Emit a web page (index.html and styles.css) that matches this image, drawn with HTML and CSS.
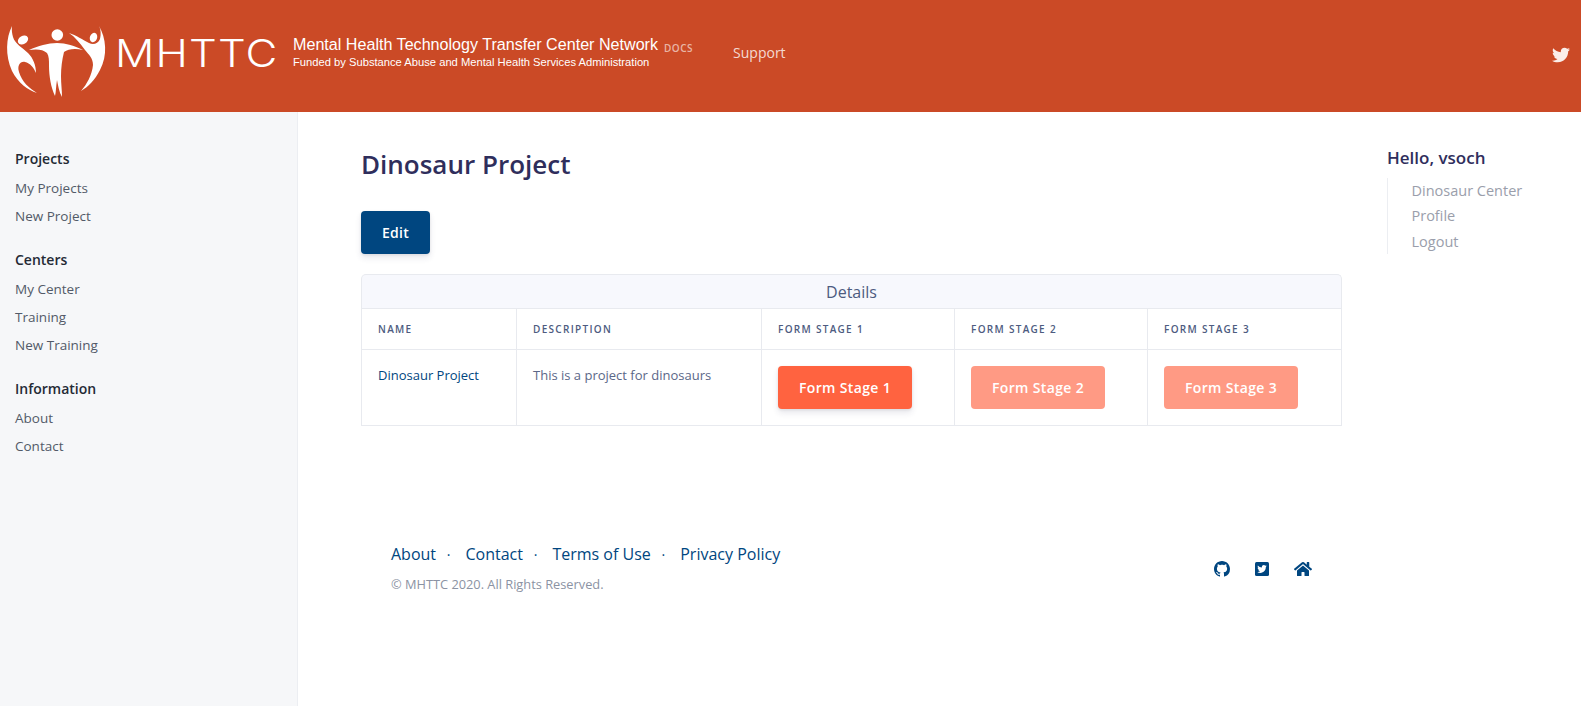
FILE: index.html
```html
<!DOCTYPE html>
<html>
  <head>
    <meta name="viewport" content="width=device-width, initial-scale=1" />
    <title>Dinosaur Project</title>
    <link rel="stylesheet" href="styles.css">
  </head>
  <body>
    <header class="topbar">
      <a class="brand" href="#">
        <svg class="brand-logo" viewBox="0 0 110 112" width="110" height="112" fill="#fff">
          <circle cx="57.3" cy="35" r="5.8"/>
          <path d="M29 50 C38 46 48 43 57 43 C66 43 75 46 83 50 C75 48 68 49 64 52 C62 60 61 68 61 76 C61 84 62 90 62 97 C59 92 58 85 57 80 C56 86 56 92 55 96 C51 88 49 76 49 66 C49 60 49 56 47 53 C43 49 36 49 29 50 Z"/>
          <ellipse cx="23" cy="40" rx="5.5" ry="4" transform="rotate(-30 23 40)"/>
          <path d="M12 26 C6 38 5 55 12 71 C18 83 28 90 37 93 C29 88 22 82 19 72 C17 66 20 61 25 62 C30 63 34 68 36 73 C36 65 33 58 28 53 C22 47 15 44 13 37 C12 33 11.5 30 12 26 Z"/>
          <ellipse cx="93.5" cy="37.5" rx="3.6" ry="4.8" transform="rotate(20 93.5 37.5)"/>
          <path d="M99 26 C106 38 108 55 100 70 C95 80 88 87 81 91 C87 84 92 75 93 65 C93 58 89 55 85 50 C80 43 75 37 69 33 C76 35 83 40 89 43 C93 45 98 44 100 39 C101 34 101 30 99 26 Z"/>
        </svg>
        <span class="brand-mark">MHTTC</span>
        <span class="brand-text">
          <span class="brand-name">Mental Health Technology Transfer Center Network</span>
          <span class="brand-sub">Funded by Substance Abuse and Mental Health Services Administration</span>
        </span>
      </a>
      <span class="docs-tag">DOCS</span>
      <a class="top-link" href="#">Support</a>
      <a class="top-twitter" href="#">
        <svg viewBox="0 0 512 512" width="18" height="18" fill="currentColor"><path d="M459.37 151.716c.325 4.548.325 9.097.325 13.645 0 138.72-105.583 298.558-298.558 298.558-59.452 0-114.68-17.219-161.137-47.106 8.447.974 16.568 1.299 25.34 1.299 49.055 0 94.213-16.568 130.274-44.832-46.132-.975-84.792-31.188-98.112-72.772 6.498.974 12.995 1.624 19.818 1.624 9.421 0 18.843-1.3 27.614-3.573-48.081-9.747-84.143-51.98-84.143-102.985v-1.299c13.969 7.797 30.214 12.67 47.431 13.319-28.264-18.843-46.781-51.005-46.781-87.391 0-19.492 5.197-37.36 14.294-52.954 51.655 63.675 129.3 105.258 216.365 109.807-1.624-7.797-2.599-15.918-2.599-24.04 0-57.828 46.782-104.934 104.934-104.934 30.213 0 57.502 12.67 76.67 33.137 23.715-4.548 46.456-13.32 66.599-25.34-7.798 24.366-22.742 44.833-42.236 59.452 18.843-2.599 37.361-6.498 54.579-14.294-12.67 18.843-28.589 35.735-46.781 48.73z"/></svg>
      </a>
    </header>

    <div class="page">
      <nav class="sidebar">
        <h4>Projects</h4>
        <ul>
          <li><a href="#">My Projects</a></li>
          <li><a href="#">New Project</a></li>
        </ul>
        <h4>Centers</h4>
        <ul>
          <li><a href="#">My Center</a></li>
          <li><a href="#">Training</a></li>
          <li><a href="#">New Training</a></li>
        </ul>
        <h4>Information</h4>
        <ul>
          <li><a href="#">About</a></li>
          <li><a href="#">Contact</a></li>
        </ul>
      </nav>

      <main class="content">
        <h1>Dinosaur Project</h1>
        <a class="btn btn-navy" href="#">Edit</a>

        <table class="details">
          <caption>Details</caption>
          <thead>
            <tr>
              <th class="col-name">Name</th>
              <th class="col-desc">Description</th>
              <th class="col-stage">Form Stage 1</th>
              <th class="col-stage">Form Stage 2</th>
              <th>Form Stage 3</th>
            </tr>
          </thead>
          <tbody>
            <tr>
              <td><a href="#">Dinosaur Project</a></td>
              <td>This is a project for dinosaurs</td>
              <td><a class="btn btn-stage" href="#">Form Stage 1</a></td>
              <td><a class="btn btn-stage btn-off" href="#">Form Stage 2</a></td>
              <td><a class="btn btn-stage btn-off" href="#">Form Stage 3</a></td>
            </tr>
          </tbody>
        </table>

        <footer class="footer">
          <div>
            <div class="footer-links">
              <a href="#">About</a><span>·</span>
              <a href="#">Contact</a><span>·</span>
              <a href="#">Terms of Use</a><span>·</span>
              <a href="#">Privacy Policy</a>
            </div>
            <p class="copyright">© MHTTC 2020. All Rights Reserved.</p>
          </div>
          <div class="footer-icons">
            <a href="#"><svg viewBox="0 0 16 16" width="16" height="16" fill="currentColor"><path d="M8 0C3.58 0 0 3.58 0 8c0 3.54 2.29 6.53 5.47 7.59.4.07.55-.17.55-.38 0-.19-.01-.82-.01-1.49-2.01.37-2.53-.49-2.69-.94-.09-.23-.48-.94-.82-1.13-.28-.15-.68-.52-.01-.53.63-.01 1.08.58 1.23.82.72 1.21 1.87.87 2.33.66.07-.52.28-.87.51-1.07-1.78-.2-3.64-.89-3.64-3.95 0-.87.31-1.59.82-2.15-.08-.2-.36-1.02.08-2.12 0 0 .67-.21 2.2.82.64-.18 1.32-.27 2-.27.68 0 1.36.09 2 .27 1.53-1.04 2.2-.82 2.2-.82.44 1.1.16 1.92.08 2.12.51.56.82 1.27.82 2.15 0 3.07-1.87 3.75-3.65 3.95.29.25.54.73.54 1.48 0 1.07-.01 1.93-.01 2.2 0 .21.15.46.55.38A8.013 8.013 0 0016 8c0-4.42-3.58-8-8-8z"/></svg></a>
            <a href="#"><svg viewBox="0 0 16 16" width="16" height="16"><rect x="1" y="1" width="14" height="14" rx="1.5" fill="currentColor"/><svg x="3.2" y="3.2" width="9.6" height="9.6" viewBox="0 0 512 512" fill="#fff"><path d="M459.37 151.716c.325 4.548.325 9.097.325 13.645 0 138.72-105.583 298.558-298.558 298.558-59.452 0-114.68-17.219-161.137-47.106 8.447.974 16.568 1.299 25.34 1.299 49.055 0 94.213-16.568 130.274-44.832-46.132-.975-84.792-31.188-98.112-72.772 6.498.974 12.995 1.624 19.818 1.624 9.421 0 18.843-1.3 27.614-3.573-48.081-9.747-84.143-51.98-84.143-102.985v-1.299c13.969 7.797 30.214 12.67 47.431 13.319-28.264-18.843-46.781-51.005-46.781-87.391 0-19.492 5.197-37.36 14.294-52.954 51.655 63.675 129.3 105.258 216.365 109.807-1.624-7.797-2.599-15.918-2.599-24.04 0-57.828 46.782-104.934 104.934-104.934 30.213 0 57.502 12.67 76.67 33.137 23.715-4.548 46.456-13.32 66.599-25.34-7.798 24.366-22.742 44.833-42.236 59.452 18.843-2.599 37.361-6.498 54.579-14.294-12.67 18.843-28.589 35.735-46.781 48.73z"/></svg></svg></a>
            <a href="#"><svg viewBox="0 0 576 512" width="18" height="16" fill="currentColor"><path d="M280.37 148.26L96 300.11V464a16 16 0 0 0 16 16l112.06-.29a16 16 0 0 0 15.92-16V368a16 16 0 0 1 16-16h64a16 16 0 0 1 16 16v95.64a16 16 0 0 0 16 16.05L464 480a16 16 0 0 0 16-16V300L295.67 148.26a12.19 12.19 0 0 0-15.3 0zM571.6 251.47L488 182.56V44.05a12 12 0 0 0-12-12h-56a12 12 0 0 0-12 12v72.61L318.47 43a48 48 0 0 0-61 0L4.34 251.47a12 12 0 0 0-1.6 16.9l25.5 31A12 12 0 0 0 45.15 301l235.22-193.74a12.19 12.19 0 0 1 15.3 0L530.9 301a12 12 0 0 0 16.9-1.6l25.5-31a12 12 0 0 0-1.7-16.93z"/></svg></a>
          </div>
        </footer>
      </main>

      <aside class="toc">
        <h5>Hello, vsoch</h5>
        <ul>
          <li><a href="#">Dinosaur Center</a></li>
          <li><a href="#">Profile</a></li>
          <li><a href="#">Logout</a></li>
        </ul>
      </aside>
    </div>
  </body>
</html>
```

FILE: styles.css
```css
* {
  box-sizing: border-box;
}

body {
  margin: 0;
  font-family: "Open Sans", sans-serif;
  font-size: 14px;
  color: #3a3a3a;
  background: #fff;
}

a {
  text-decoration: none;
}

ul {
  list-style: none;
  margin: 0;
  padding: 0;
}

/* top bar */
.topbar {
  display: flex;
  align-items: center;
  height: 112px;
  background: #cb4a26;
  color: #fff;
}

.brand {
  display: flex;
  align-items: center;
  color: #fff;
}

.brand-logo {
  flex: none;
}

.brand-mark {
  flex: none;
  width: 178px;
  margin: 0 0 7px 5px;
  font-family: "Inter", sans-serif;
  font-size: 38px;
  font-weight: 300;
  letter-spacing: 1px;
  line-height: 1;
  transform: scaleX(1.15);
  transform-origin: left center;
}

.brand-text {
  display: flex;
  flex-direction: column;
  margin-bottom: 6px;
  font-family: "Liberation Sans", sans-serif;
}

.brand-name {
  margin: -2px 0 1px;
  font-size: 16.13px;
  line-height: 20px;
}

.brand-sub {
  font-size: 11.2px;
  line-height: 15px;
}

.docs-tag {
  margin: 0 0 16px 6px;
  font-size: 10px;
  font-weight: 600;
  color: rgba(255, 255, 255, 0.6);
  letter-spacing: 0.5px;
}

.top-link {
  margin: 0 0 8px 40px;
  font-size: 14px;
  color: rgba(255, 255, 255, 0.8);
}

.top-twitter {
  display: flex;
  margin: 0 11px 3px auto;
  color: #fbeee9;
}

/* page columns */
.page {
  display: flex;
  min-height: 594px;
}

.sidebar {
  flex: none;
  width: 298px;
  padding: 36px 15px 0;
  background: #f6f7f9;
  border-right: 1px solid #eceef2;
}

.sidebar h4 {
  margin: 0 0 4px;
  font-size: 14px;
  font-weight: 600;
  line-height: 22px;
  color: #242a35;
}

.sidebar ul {
  margin-bottom: 19px;
}

.sidebar li {
  line-height: 28px;
  font-size: 13.5px;
}

.sidebar a {
  color: #525a68;
}

/* main column */
.content {
  flex: none;
  width: 1043px;
  padding: 33px 0 0 63px;
}

.content h1 {
  margin: 0 0 28px;
  font-size: 26px;
  font-weight: 600;
  line-height: 38px;
  color: #2f2e5c;
}

.btn {
  display: inline-block;
  border-radius: 4px;
  font-weight: 600;
  color: #fff;
  text-align: center;
  box-shadow: 0 4px 6px rgba(50, 50, 93, 0.11), 0 1px 3px rgba(0, 0, 0, 0.08);
}

.btn-navy {
  width: 69px;
  height: 43px;
  line-height: 43px;
  font-size: 14px;
  letter-spacing: 0.3px;
  background: #004680;
}

.details {
  margin-top: 20px;
  width: 981px;
  border-collapse: separate;
  border-spacing: 0;
  table-layout: fixed;
}

.details caption {
  height: 34px;
  line-height: 34px;
  font-size: 16px;
  color: #4d5b80;
  background: #f7f8fd;
  border: 1px solid #e8eaef;
  border-bottom: none;
  border-radius: 5px 5px 0 0;
}

.details th,
.details td {
  padding: 0 16px;
  text-align: left;
  border-right: 1px solid #e8eaef;
  border-top: 1px solid #e8eaef;
}

.details th:first-child,
.details td:first-child {
  border-left: 1px solid #e8eaef;
}

.details th {
  height: 41px;
  font-size: 10px;
  font-weight: 600;
  letter-spacing: 1.3px;
  text-transform: uppercase;
  color: #4d5b80;
}

.details td {
  height: 76px;
  padding-top: 16px;
  padding-bottom: 16px;
  vertical-align: top;
  font-size: 13px;
  line-height: 18px;
  color: #5b6788;
  border-bottom: 1px solid #e8eaef;
}

.details td a:not(.btn) {
  color: #004680;
}

.col-name {
  width: 156px;
}

.col-desc {
  width: 245px;
}

.col-stage {
  width: 193px;
}

.btn-stage {
  width: 134px;
  height: 43px;
  line-height: 43px;
  font-size: 14px;
  letter-spacing: 0.35px;
  background: #ff6340;
}

.btn-off {
  background: #ff9a84;
  box-shadow: none;
}

/* footer */
.footer {
  display: flex;
  justify-content: space-between;
  align-items: center;
  width: 981px;
  margin-top: 116px;
  padding: 0 30.5px 0 30px;
}

.footer-links {
  font-size: 16px;
  line-height: 24px;
  color: #004680;
}

.footer-links a {
  color: #004680;
}

.footer-links span {
  margin: 0 10.8px;
  font-size: 14px;
}

.copyright {
  margin: 8px 0 0;
  font-size: 12.8px;
  line-height: 18px;
  color: #8b93a3;
}

.footer-icons {
  display: flex;
  gap: 24px;
  align-items: center;
  margin-top: 3px;
  color: #004680;
}

.footer-icons a {
  display: flex;
  color: #004680;
}

/* right column */
.toc {
  padding: 34px 0 0 46px;
}

.toc h5 {
  margin: 0 0 8px;
  font-size: 17px;
  font-weight: 600;
  line-height: 24px;
  color: #2f2e5c;
}

.toc ul {
  padding-left: 23.5px;
  border-left: 1px solid #eceef2;
}

.toc li {
  font-size: 14.5px;
  line-height: 25.4px;
}

.toc a {
  color: #9a9eab;
}
```
